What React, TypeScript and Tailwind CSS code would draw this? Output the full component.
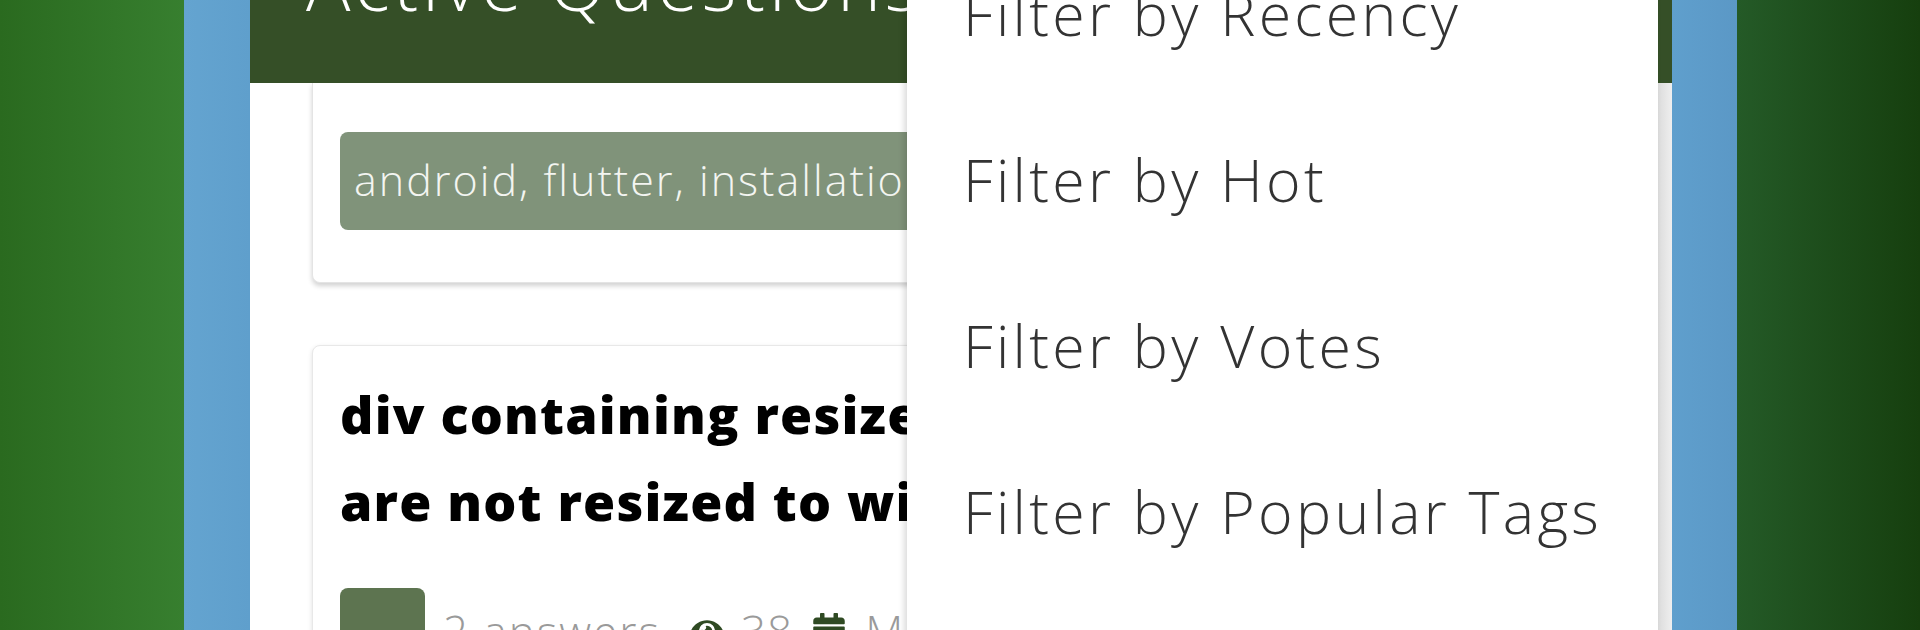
import { FaEye, FaCalendar } from "react-icons/fa";

const sans = "font-['Open_Sans','Noto_Sans',sans-serif]";

const filters = ["Filter by Recency", "Filter by Hot", "Filter by Votes", "Filter by Popular Tags"];

// ── Question cards ────────────────────────────────────────────────────────────

function TagsCard() {
  return (
    <div className="h-[200px] rounded-b-lg border border-t-0 border-[#e4e4e4] bg-white shadow-[0_3px_5px_rgba(0,0,0,0.18)] px-[27px] pt-[49px]">
      <div className="h-[98px] w-[1100px] rounded-lg bg-[#80937a] px-[14px] flex items-center">
        <span className="-mt-[4px] text-[43px] leading-none font-light text-[#f3f5f1] tracking-[2px] whitespace-nowrap">
          android, flutter, installation, android-studio
        </span>
      </div>
    </div>
  );
}

function QuestionCard() {
  return (
    <div className="mt-[62px] h-[400px] rounded-lg border border-[#e8e8e8] bg-white shadow-[0_2px_5px_rgba(0,0,0,0.12)] px-[27px] pt-[24px]">
      <h3 className="text-[52px] leading-[87px] font-extrabold text-black whitespace-nowrap tracking-[1.2px]">
        div containing resized images and images
        <br />
        are not resized to window width
      </h3>
      <div className="mt-[44px] flex items-center gap-[18px]">
        <button className="w-[85px] h-[85px] rounded-lg bg-[#5d7450] text-white text-[40px] leading-none flex items-end justify-center pb-[6px]">
          +1
        </button>
        <span className="text-[44px] leading-none font-light text-[#9a9a9a] tracking-[2px]">2 answers</span>
        <FaEye className="ml-[12px] w-[32px] h-[32px] text-[#2f4a23]" />
        <span className="text-[44px] leading-none font-light text-[#9a9a9a] tracking-[1px]">38</span>
        <FaCalendar className="w-[36px] h-[36px] text-[#2f4a23]" />
        <span className="text-[44px] leading-none font-light text-[#9a9a9a] tracking-[2px]">May 12, 2020</span>
      </div>
    </div>
  );
}

// ── Filter menu ───────────────────────────────────────────────────────────────

function FilterMenu() {
  return (
    <div className="absolute left-[657px] top-[-70px] w-[751px] h-[800px] bg-white shadow-[-3px_0_6px_rgba(0,0,0,0.14)]">
      {filters.map(f => (
        <div key={f} className="h-[166px] flex items-center pl-[56px]">
          <span className="text-[59px] leading-none font-light text-[#333333] tracking-[3.3px] whitespace-nowrap">{f}</span>
        </div>
      ))}
    </div>
  );
}

// ── Page ──────────────────────────────────────────────────────────────────────

export default function App() {
  return (
    <div className={`w-[1920px] h-[630px] overflow-hidden flex ${sans}`}>
      <div className="w-[184px] shrink-0 bg-gradient-to-r from-[#2a6a1f] to-[#377f2f]" />
      <div className="w-[66px] shrink-0 bg-gradient-to-r from-[#64a4d0] to-[#5f9fcc]" />

      <div className="relative w-[1422px] shrink-0 flex flex-col">
        <header className="h-[83px] shrink-0 bg-[#354f27] overflow-hidden pl-[56px]">
          <h1 className="-mt-[54px] text-[74px] leading-none font-light text-white tracking-[4px] whitespace-nowrap">
            Active Questions
          </h1>
        </header>

        <div className="flex-1 flex min-h-0">
          <main className="flex-1 bg-white px-[62px] overflow-hidden">
            <TagsCard />
            <QuestionCard />
          </main>
          <div className="w-[14px] shrink-0 bg-gradient-to-r from-[#dcdcdc] to-[#efefef]" />
        </div>

        <FilterMenu />
      </div>

      <div className="w-[65px] shrink-0 bg-gradient-to-r from-[#5f9fcd] to-[#5b98c6]" />
      <div className="flex-1 bg-gradient-to-r from-[#245a27] to-[#163f0e]" />
    </div>
  );
}
